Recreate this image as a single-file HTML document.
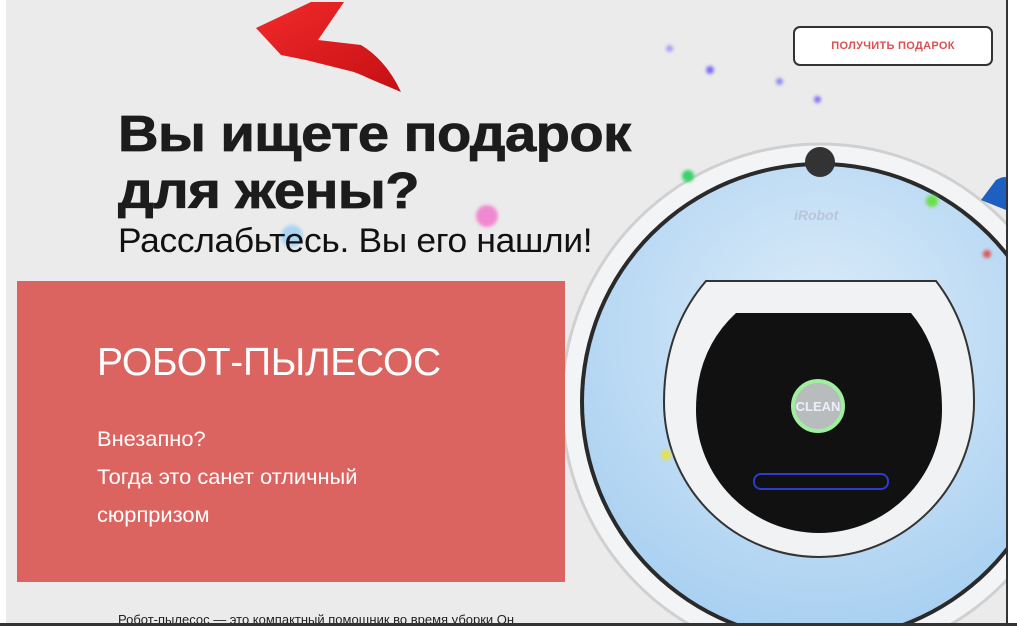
<!DOCTYPE html>
<html><head><meta charset="utf-8"><style>
html,body{margin:0;padding:0}
body{width:1017px;height:626px;overflow:hidden;background:#fff;position:relative;font-family:"Liberation Sans","Noto Sans CJK SC",sans-serif}
#pg{position:absolute;left:6px;top:0;width:1000px;height:624px;background:#ebebeb;overflow:hidden}
#rb{position:absolute;right:0;top:0;width:11px;height:626px;background:#fff;border-left:2px solid #333;box-sizing:border-box}
#bb{position:absolute;left:0;top:623px;width:1017px;height:3px;background:#333}
.h1{position:absolute;left:112px;top:105px;font-size:51px;font-weight:bold;line-height:57px;color:#1c1c1c;letter-spacing:-0.5px;transform:scaleX(1.1);transform-origin:0 0;white-space:nowrap;-webkit-text-stroke:0.8px #1c1c1c}
.h2{position:absolute;left:112px;top:222px;font-size:34px;color:#111;letter-spacing:-0.3px;transform:scaleX(1.04);transform-origin:0 0;white-space:nowrap}
#card{position:absolute;left:11px;top:281px;width:548px;height:301px;background:#dc6460;color:#fff}
#card .t{position:absolute;left:80px;top:60px;font-size:39px;letter-spacing:-0.3px;white-space:nowrap}
#card .p{position:absolute;left:80px;top:140px;font-size:21px;line-height:38px;transform:scaleX(1.04);transform-origin:0 0;white-space:nowrap}
#btn{position:absolute;left:787px;top:26px;width:196px;height:36px;border:2px solid #333;border-radius:7px;background:#fff;color:#dc5050;font-size:11px;font-weight:bold;text-align:center;line-height:36px;letter-spacing:0.3px}
.ft{position:absolute;left:112px;top:612px;font-size:13px;color:#222;white-space:nowrap}
.d{position:absolute;border-radius:50%;filter:blur(1.5px)}
</style></head><body>
<div id="pg">
<svg width="1000" height="624" style="position:absolute;left:0;top:0">
<defs><radialGradient id="bl" cx="50%" cy="35%" r="65%"><stop offset="0" stop-color="#dcecf9"/><stop offset="1" stop-color="#a9d0f1"/></radialGradient>
<linearGradient id="rd" x1="0" y1="0" x2="1" y2="1"><stop offset="0" stop-color="#f22a2a"/><stop offset="1" stop-color="#c40f14"/></linearGradient></defs>
<path d="M250 28 L305 2 L338 2 L312 40 L355 45 Q380 60 395 92 L362 78 Q350 72 340 70 L320 65 L300 60 L275 55 Z" fill="url(#rd)"/>
<circle cx="814" cy="402" r="258" fill="#f3f4f6" stroke="#d0d0d0" stroke-width="3"/>
<circle cx="814" cy="402" r="240" fill="#2a2a2a"/>
<circle cx="814" cy="402" r="236" fill="url(#bl)"/>
<path d="M700 281 L930 281 Q968 330 968 402 A155 155 0 0 1 658 402 Q658 330 700 281 Z" fill="#f1f2f4" stroke="#333" stroke-width="2"/>
<path d="M730 313 L905 313 Q936 350 936 410 A123 123 0 0 1 690 410 Q690 350 730 313 Z" fill="#111"/>
<circle cx="812" cy="406" r="25" fill="#b8bcbc" stroke="#9ef09e" stroke-width="4"/>
<text x="812" y="411" font-size="13" font-weight="bold" fill="#eef" text-anchor="middle" font-family="Liberation Sans">CLEAN</text>
<rect x="748" y="474" width="134" height="15" rx="7" fill="none" stroke="#2b3ccf" stroke-width="2"/>
<circle cx="814" cy="162" r="15" fill="#333"/>
<text x="788" y="220" font-size="14" font-style="italic" font-weight="bold" fill="#b8c6d8" font-family="Liberation Sans">iRobot</text>
<path d="M990 180 Q1000 175 1000 178 L1000 210 L975 200 Z" fill="#1f5fc0"/>
</svg>
<div class="d" style="left:660px;top:45px;width:7px;height:7px;background:#a4a0f4"></div>
<div class="d" style="left:700px;top:66px;width:8px;height:8px;background:#7a6ef5"></div>
<div class="d" style="left:808px;top:96px;width:7px;height:7px;background:#8a6ef5"></div>
<div class="d" style="left:770px;top:78px;width:7px;height:7px;background:#8a8af0"></div>
<div class="d" style="left:676px;top:170px;width:12px;height:12px;background:#3bd16a"></div>
<div class="d" style="left:470px;top:205px;width:22px;height:22px;background:#f08ad0"></div>
<div class="d" style="left:275px;top:225px;width:22px;height:22px;background:#aad4f2"></div>
<div class="d" style="left:920px;top:195px;width:12px;height:12px;background:#6ae04a"></div>
<div class="d" style="left:977px;top:250px;width:8px;height:8px;background:#e05454"></div>
<div class="d" style="left:655px;top:450px;width:10px;height:10px;background:#e6e04a"></div>
<div class="h1">Вы ищете подарок<br>для жены?</div>
<div class="h2">Расслабьтесь. Вы его нашли!</div>
<div id="card"><div class="t">РОБОТ-ПЫЛЕСОС</div><div class="p">Внезапно?<br>Тогда это санет отличный<br>сюрпризом</div></div>
<div id="btn">ПОЛУЧИТЬ ПОДАРОК</div>
<div class="ft">Робот-пылесос — это компактный помощник во время уборки Он</div>
</div>
<div id="rb"></div><div id="bb"></div>
</body></html>
